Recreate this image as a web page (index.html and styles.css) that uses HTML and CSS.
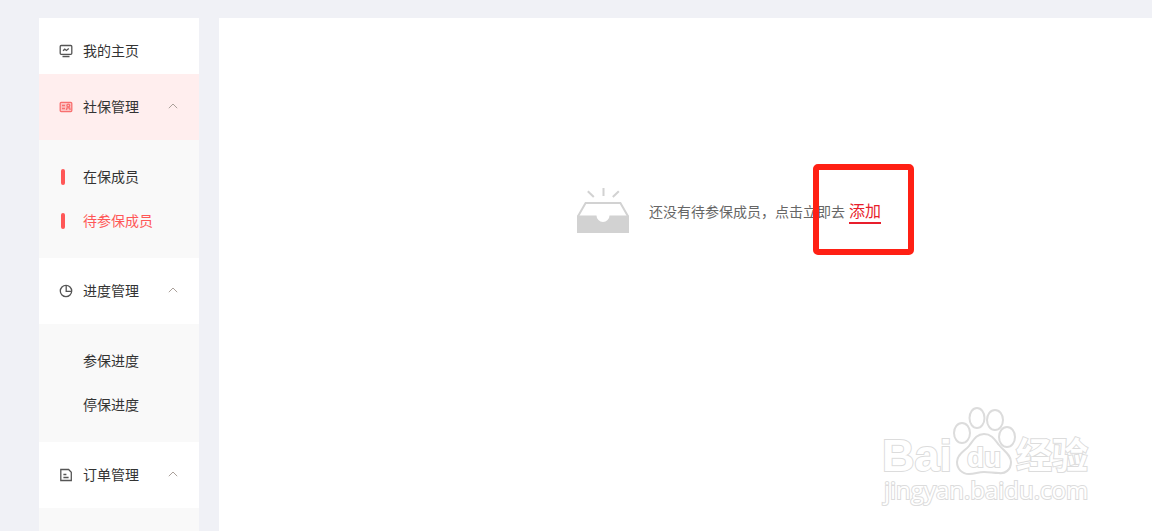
FILE: index.html
```html
<!DOCTYPE html>
<html lang="zh-CN">
<head>
  <meta charset="UTF-8">
  <meta name="viewport" content="width=device-width, initial-scale=1.0">
  <title>待参保成员</title>
  <link rel="stylesheet" href="styles.css">
</head>
<body>
  <div class="page">
    <nav class="sidebar">
      <a class="menu-title home" href="#">
        <svg class="icon" viewBox="0 0 14 14">
          <rect x="1.2" y="1.5" width="11.6" height="8.8" rx="1"/>
          <path d="M4 6.8l1.8-1.6 1.6 1.2 2.4-2M3.5 12.5h7"/>
        </svg>
        <span>我的主页</span>
      </a>

      <button class="menu-title active" type="button">
        <svg class="icon" viewBox="0 0 14 14">
          <rect x="1.2" y="2.4" width="11.6" height="9.2" rx="1"/>
          <path d="M3 5.5h3M3 8.5h3M7.4 10L8 7.8h2.6l.6 2.200"/>
          <circle cx="9.3" cy="5.6" r="1.4"/>
        </svg>
        <span>社保管理</span>
        <svg class="arrow" viewBox="0 0 10 6"><path d="M.8 5.2L5 1l4.2 4.2"/></svg>
      </button>
      <div class="submenu">
        <a class="marked" href="#">在保成员</a>
        <a class="marked current" href="#">待参保成员</a>
      </div>

      <button class="menu-title" type="button">
        <svg class="icon" viewBox="0 0 14 14">
          <circle cx="7" cy="7" r="5.7"/>
          <path d="M7.2 1.300v6h5.500"/>
        </svg>
        <span>进度管理</span>
        <svg class="arrow" viewBox="0 0 10 6"><path d="M.8 5.2L5 1l4.2 4.2"/></svg>
      </button>
      <div class="submenu">
        <a href="#">参保进度</a>
        <a href="#">停保进度</a>
      </div>

      <button class="menu-title" type="button">
        <svg class="icon" viewBox="0 0 14 14">
          <path d="M1.800 1.500h7.800l2.700 2.700v8.300H1.800zM4.400 6.500h3M4.400 9.500h5.200"/>
        </svg>
        <span>订单管理</span>
        <svg class="arrow" viewBox="0 0 10 6"><path d="M.8 5.2L5 1l4.2 4.2"/></svg>
      </button>
    </nav>

    <main class="content">
      <div class="empty">
        <svg class="empty-icon" viewBox="0 0 52 46">
          <path class="rays" d="M10.800 3.200l6 5.800M26.500 0v8M41.800 3.200l-6 5.800"/>
          <path class="box" d="M1 28.200L8.600 15h34.800L51 28.200"/>
          <path class="tray" d="M0 27.500h19.500a6.500 6.500 0 0 0 13 0H52V45H0z"/>
        </svg>
        <p>还没有待参保成员，点击立即去 <a class="add" href="#">添加</a></p>
      </div>
    </main>
  </div>

  <svg class="watermark" viewBox="0 0 212 104">
    <g class="paw">
      <ellipse cx="82" cy="31" rx="8" ry="10"/>
      <ellipse cx="97" cy="16" rx="7.500" ry="10"/>
      <ellipse cx="115" cy="18" rx="8" ry="10"/>
      <ellipse cx="127" cy="35" rx="8" ry="10"/>
      <path d="M104 32c8 0 11 6 15 11 5 6 12 10 12 17 0 8-6 12-12 11-6 0-9-1-15-1s-9 2-15 2c-7 0-12-5-12-12 0-8 8-11 12-16s7-12 15-12z"/>
    </g>
    <text class="brand" x="2" y="69">Bai</text>
    <text class="du" x="87" y="65">du</text>
    <text class="brand-cn" x="136" y="67">经验</text>
    <text class="site" x="4" y="97">jingyan.baidu.com</text>
  </svg>
</body>
</html>
```

FILE: styles.css
```css
*,
*::before,
*::after {
  box-sizing: border-box;
}
body {
  margin: 0;
  font-family: "Liberation Sans", "Noto Sans CJK SC", sans-serif;
  font-size: 14px;
  color: #333;
  background-color: #f0f1f6;
}
a {
  color: inherit;
  text-decoration: none;
}
.page {
  display: flex;
  gap: 20px;
  min-height: 100vh;
  padding: 18px 0 0 39px;
}

/* sidebar */
.sidebar {
  flex: none;
  width: 160px;
  background-color: #f9f9f9;
}
.menu-title {
  display: flex;
  align-items: center;
  width: 100%;
  height: 66px;
  padding: 0 20px 2px;
  border: none;
  background-color: #fff;
  color: #333;
  font: inherit;
  text-align: left;
  cursor: pointer;
}
.menu-title.home {
  height: 56px;
  padding-top: 10px;
}
.menu-title.active {
  background-color: #ffeeee;
}
.icon {
  width: 14px;
  height: 14px;
  margin-top: 2px;
  margin-right: 10px;
  fill: none;
  stroke: #555;
  stroke-width: 1.3;
}
.active .icon {
  stroke: #f87070;
  fill: #fcc4c4;
}
.arrow {
  width: 10px;
  height: 6px;
  margin-left: auto;
  margin-right: 1px;
  fill: none;
  stroke: #aaa09a;
}
.submenu {
  padding: 15px 0;
}
.submenu a {
  display: flex;
  align-items: center;
  height: 44px;
  padding-bottom: 2px;
  padding-left: 44px;
}
.submenu .marked {
  padding-left: 22px;
}
.submenu .marked::before {
  content: "";
  width: 4px;
  height: 16px;
  margin-top: 2px;
  margin-right: 18px;
  border-radius: 2px;
  background-color: #ff5757;
}
.submenu .current {
  color: #ff5757;
}

/* content */
.content {
  flex: 1;
  background-color: #fff;
}
.empty {
  display: flex;
  align-items: center;
  gap: 20px;
  padding: 170px 0 0 358px;
  color: #666;
}
.empty p {
  margin: 2px 0 0;
  white-space: nowrap;
}
.empty-icon {
  width: 52px;
  height: 46px;
}
.rays,
.box {
  fill: none;
  stroke: #d2d2d2;
  stroke-width: 2;
}
.tray {
  fill: #d2d2d2;
}
.add {
  position: relative;
  display: inline-block;
  border-bottom: 2px solid #e81e2c;
  color: #e81e2c;
  font-size: 16px;
  line-height: 20px;
}
.add::after {
  content: "";
  position: absolute;
  top: -38px;
  left: -36px;
  width: 101px;
  height: 91px;
  border: 6px solid #ff2014;
  border-radius: 5px;
}

/* watermark */
.watermark {
  position: absolute;
  right: 60px;
  bottom: 25px;
  width: 212px;
  height: 104px;
  fill: #fff;
  stroke: #dcdcdc;
  stroke-width: 2;
  pointer-events: none;
}
.watermark text {
  paint-order: stroke;
}
.brand {
  font-size: 45px;
  font-weight: bold;
}
.du {
  font-size: 28px;
  font-weight: bold;
}
.brand-cn {
  font-size: 36px;
  font-weight: bold;
}
.site {
  font-family: "Open Sans", sans-serif;
  font-size: 24px;
}
```
